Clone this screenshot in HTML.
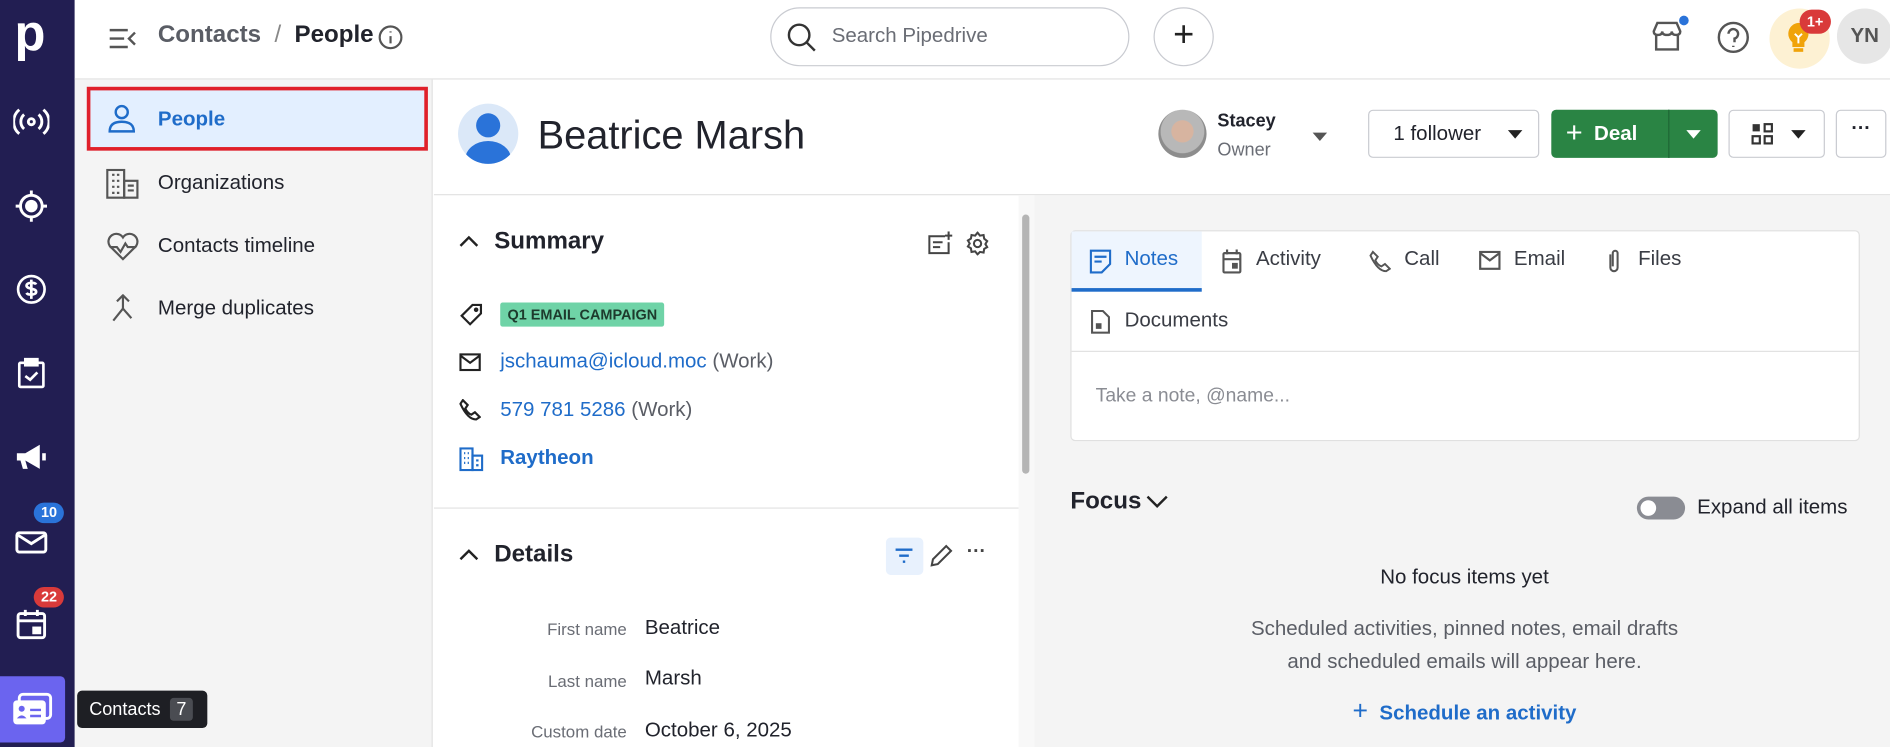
<!DOCTYPE html>
<html><head><meta charset="utf-8"><style>
*{box-sizing:border-box;margin:0;padding:0}
body{width:1890px;height:747px;overflow:hidden;background:#fff;font-family:"Liberation Sans",sans-serif;color:#21232c}
#w{width:1568px;height:620px;transform:scale(1.20536);transform-origin:0 0;position:relative}
.a{position:absolute}
.nav{left:0;top:0;width:62px;height:620px;background:#221e52}
.ni{position:absolute;left:11px;width:30px;height:30px;color:#fff}
.badge{position:absolute;height:17px;border-radius:9px;color:#fff;font-size:12px;font-weight:bold;line-height:17px;padding:0 6px}
.side{left:62px;top:66px;width:297px;height:554px;background:#f4f4f4;border-right:1px solid #e2e2e2}
.si{position:absolute;left:0;width:297px;height:40px;font-size:17px;line-height:40px;padding-left:69px;color:#21232c}
.si svg{position:absolute;left:26px;top:8px}
.top{left:62px;top:0;width:1506px;height:66px;border-bottom:1px solid #e2e2e2;background:#fff}
.btn{position:absolute;border:1px solid #c9cbd1;border-radius:4px;background:#fff;height:40px;top:91px}
.lbl{position:absolute;width:160px;text-align:right;font-size:14px;color:#6a6d75}
.val{position:absolute;left:535px;font-size:17px}
.tab{position:absolute;font-size:17px;color:#3a3d45;top:205px}
</style></head><body><div id="w">
<div class="a nav">
 <div class="a" style="left:12px;top:8px;color:#fff;font-size:42px;font-weight:bold;line-height:40px">p</div>
 <svg class="ni" style="top:86px" viewBox="0 0 30 30" fill="none" stroke="#fff" stroke-width="2.4"><circle cx="15" cy="15" r="2.5"/><path d="M9 9a8 8 0 0 0 0 12M21 9a8 8 0 0 1 0 12M5 5a13 13 0 0 0 0 20M25 5a13 13 0 0 1 0 20"/></svg>
 <svg class="ni" style="top:156px" viewBox="0 0 30 30" fill="none" stroke="#fff" stroke-width="2.4"><circle cx="15" cy="15" r="9"/><circle cx="15" cy="15" r="4" fill="#fff"/><path d="M15 2v4M15 24v4M2 15h4M24 15h4"/></svg>
 <svg class="ni" style="top:225px" viewBox="0 0 30 30" fill="none" stroke="#fff" stroke-width="2.2"><circle cx="15" cy="15" r="11"/><path d="M19 11c-1-2-8-2-8 1s8 2 8 5-7 3-8 1M15 7v16"/></svg>
 <svg class="ni" style="top:295px" viewBox="0 0 30 30" fill="none" stroke="#fff" stroke-width="2.2"><rect x="5" y="6" width="20" height="20" rx="1"/><rect x="10" y="3" width="10" height="5" fill="#fff"/><path d="M10 17l4 3 6-6"/></svg>
 <svg class="ni" style="top:364px" viewBox="0 0 30 30" fill="#fff"><path d="M3 12h7l12-7v20l-12-7H3z"/><path d="M6 18l2 7h4l-2-7z"/><rect x="24" y="12" width="3" height="6"/></svg>
 <svg class="ni" style="top:434px" viewBox="0 0 30 30" fill="none" stroke="#fff" stroke-width="2.4"><rect x="3" y="8" width="24" height="16" rx="2"/><path d="M4 10l11 7 11-7"/></svg>
 <div class="badge" style="left:28px;top:417px;background:#2a73d9">10</div>
 <svg class="ni" style="top:503px" viewBox="0 0 30 30" fill="none" stroke="#fff" stroke-width="2.4"><rect x="4" y="6" width="22" height="20" rx="2"/><path d="M4 12h22M10 3v5M20 3v5"/><rect x="17" y="18" width="5" height="4" fill="#fff"/></svg>
 <div class="badge" style="left:28px;top:487px;background:#d93a3a">22</div>
 <div class="a" style="left:0;top:561px;width:54px;height:55px;background:#6b64ef;border-radius:0 4px 4px 0"></div>
 <svg class="a" style="left:10px;top:574px" width="34" height="30" viewBox="0 0 34 30"><rect x="6" y="2" width="26" height="20" rx="3" fill="none" stroke="#fff" stroke-width="2.4"/><rect x="1" y="7" width="27" height="20" rx="3" fill="#fff"/><circle cx="8" cy="14" r="2.5" fill="#6b64ef"/><path d="M4 22q4-5 8 0z" fill="#6b64ef"/><path d="M15 15h9M15 20h9" stroke="#6b64ef" stroke-width="2"/></svg>
</div>

<div class="a top">
 <svg class="a" style="left:28px;top:22px" width="24" height="20" viewBox="0 0 24 20" fill="none" stroke="#555" stroke-width="2"><path d="M1 3h15M1 10h12M1 17h15M22 5l-5 5 5 5"/></svg>
 <div class="a" style="left:69px;top:18px;font-size:20px;color:#5a5d65;font-weight:bold">Contacts <span style="font-weight:normal;color:#888">&nbsp;/&nbsp;</span> <span style="color:#21232c">People</span></div>
 <svg class="a" style="left:251px;top:20px" width="22" height="22" viewBox="0 0 22 22" fill="none" stroke="#555" stroke-width="1.8"><circle cx="11" cy="11" r="9"/><path d="M11 10v6M11 6v1"/></svg>
 <div class="a" style="left:577px;top:6px;width:298px;height:49px;border:1px solid #c9cbd1;border-radius:25px"></div>
 <svg class="a" style="left:590px;top:18px" width="26" height="26" viewBox="0 0 26 26" fill="none" stroke="#333" stroke-width="2"><circle cx="11" cy="11" r="8.5"/><path d="M17 17l7 7"/></svg>
 <div class="a" style="left:628px;top:20px;font-size:17px;color:#6a6d75">Search Pipedrive</div>
 <div class="a" style="left:895px;top:6px;width:50px;height:49px;border:1px solid #c9cbd1;border-radius:50%;font-size:30px;text-align:center;line-height:44px;color:#222">+</div>
 <svg class="a" style="left:1307px;top:17px" width="28" height="26" viewBox="0 0 28 26" fill="none" stroke="#555" stroke-width="2"><path d="M3 9l3-7h16l3 7q0 3-3.5 3t-3.5-3q0 3-4 3t-4-3q0 3-3.5 3T3 9zM5 12v12h18V12"/></svg>
 <div class="a" style="left:1331px;top:13px;width:8px;height:8px;border-radius:50%;background:#2a73d9"></div>
 <svg class="a" style="left:1362px;top:17px" width="28" height="28" viewBox="0 0 28 28" fill="none" stroke="#555" stroke-width="2"><circle cx="14" cy="14" r="12"/><path d="M10 11a4 4 0 1 1 5 4v3M14 21v1"/></svg>
 <div class="a" style="left:1406px;top:7px;width:50px;height:50px;border-radius:50%;background:#fdf1d3"></div>
 <svg class="a" style="left:1419px;top:18px" width="22" height="28" viewBox="0 0 22 28"><path d="M11 1a9 9 0 0 0-5 16v4h10v-4a9 9 0 0 0-5-16z" fill="#f0a30a"/><rect x="7" y="22" width="8" height="3" fill="#f0a30a"/><path d="M8 10l3 3 3-3M11 13v5" stroke="#fff" stroke-width="1.6" fill="none"/></svg>
 <div class="badge" style="left:1431px;top:8px;background:#d93a3a;height:20px;line-height:20px;border-radius:10px">1+</div>
 <div class="a" style="left:1462px;top:7px;width:46px;height:46px;border-radius:50%;background:#e6e6e6;font-size:17px;font-weight:bold;color:#555;text-align:center;line-height:46px">YN</div>
</div>

<div class="a side">
 <div class="si" style="top:6px;left:10px;width:283px;height:53px;line-height:47px;background:#e3efff;border:3px solid #e0202a;color:#1f6cc9;font-weight:bold;padding-left:56px"><svg style="left:13px;top:10px" width="26" height="26" viewBox="0 0 26 26" fill="none" stroke="#1f6cc9" stroke-width="2"><circle cx="13" cy="8" r="5"/><path d="M3 24q0-8 10-8t10 8z"/></svg>People</div>
 <div class="si" style="top:66px"><svg width="28" height="26" viewBox="0 0 28 26" fill="none" stroke="#555" stroke-width="1.8"><rect x="1" y="1" width="14" height="23"/><rect x="15" y="10" width="11" height="14"/><path d="M5 5h2M9 5h2M5 10h2M9 10h2M5 15h2M9 15h2M5 20h2M9 20h2M18 14h5M18 18h5"/></svg>Organizations</div>
 <div class="si" style="top:118px"><svg width="28" height="26" viewBox="0 0 28 26" fill="none" stroke="#555" stroke-width="1.8"><path d="M14 23L3 12a6 6 0 0 1 11-7 6 6 0 0 1 11 7z"/><path d="M3 13h6l3 4 4-7 2 3h7"/></svg>Contacts timeline</div>
 <div class="si" style="top:170px"><svg width="28" height="26" viewBox="0 0 28 26" fill="none" stroke="#555" stroke-width="1.8"><path d="M9 6l5-5 5 5M14 1v11L6 22M14 12l7 8"/></svg>Merge duplicates</div>
</div>

<!-- header -->
<div class="a" style="left:360px;top:161px;width:1208px;height:1px;background:#e2e2e2"></div>
<div class="a" style="left:380px;top:86px;width:50px;height:50px;border-radius:50%;background:#dbe8f8;overflow:hidden"><div class="a" style="left:15px;top:8px;width:20px;height:20px;border-radius:50%;background:#2a73d9"></div><div class="a" style="left:6px;top:31px;width:38px;height:30px;border-radius:50%;background:#2a73d9"></div></div>
<div class="a" style="left:446px;top:93px;font-size:33px;color:#21232c">Beatrice Marsh</div>
<div class="a" style="left:961px;top:91px;width:40px;height:40px;border-radius:50%;background:radial-gradient(circle at 50% 45%,#d7b4a0 0 30%,#b8b8b8 32% 60%,#8d8d8d 62%)"></div>
<div class="a" style="left:1010px;top:92px;font-size:15px;font-weight:bold">Stacey</div>
<div class="a" style="left:1010px;top:116px;font-size:15px;color:#6a6d75">Owner</div>
<div class="a" style="left:1089px;top:110px;border:6px solid transparent;border-top:7px solid #555"></div>
<div class="btn" style="left:1135px;width:142px;font-size:17px;line-height:38px;padding-left:20px">1 follower<span class="a" style="left:115px;top:16px;border:6px solid transparent;border-top:7px solid #222"></span></div>
<div class="a" style="left:1287px;top:91px;width:138px;height:40px;background:#2a8444;border-radius:4px;color:#fff;font-size:17px;font-weight:bold;line-height:40px;padding-left:12px"><span style="font-size:24px;font-weight:normal;vertical-align:-2px">+</span>&nbsp; Deal<div class="a" style="left:97px;top:0;width:1px;height:40px;background:#1e6634"></div><span class="a" style="left:112px;top:17px;border:6px solid transparent;border-top:7px solid #fff"></span></div>
<div class="btn" style="left:1434px;width:80px"><svg class="a" style="left:18px;top:10px" width="18" height="18" viewBox="0 0 18 18"><rect x="1" y="1" width="6" height="6" fill="#333"/><rect x="11" y="1" width="6" height="6" fill="none" stroke="#333" stroke-width="1.8"/><rect x="1" y="11" width="6" height="6" fill="none" stroke="#333" stroke-width="1.8"/><rect x="11" y="11" width="6" height="6" fill="none" stroke="#333" stroke-width="1.8"/></svg><span class="a" style="left:51px;top:16px;border:6px solid transparent;border-top:7px solid #222"></span></div>
<div class="btn" style="left:1523px;width:42px;text-align:center;font-weight:bold;line-height:30px">···</div>

<!-- left column -->
<div class="a" style="left:845px;top:162px;width:13px;height:458px;background:#f8f8f8"></div>
<div class="a" style="left:848px;top:178px;width:6px;height:215px;border-radius:3px;background:#b5b5b5"></div>
<div class="a" style="left:360px;top:421px;width:485px;height:1px;background:#e2e2e2"></div>
<svg class="a" style="left:380px;top:193px" width="18" height="14" viewBox="0 0 18 14" fill="none" stroke="#222" stroke-width="2"><path d="M2 11l7-7 7 7"/></svg>
<div class="a" style="left:410px;top:189px;font-size:20px;font-weight:bold">Summary</div>
<svg class="a" style="left:770px;top:192px" width="22" height="20" viewBox="0 0 22 20" fill="none" stroke="#444" stroke-width="1.7"><path d="M14 4H1v14h16V9M4 9h8M4 13h6M17 0v7M14 3.5h6"/></svg>
<svg class="a" style="left:801px;top:192px" width="20" height="20" viewBox="0 0 20 20" fill="none" stroke="#444" stroke-width="1.7"><circle cx="10" cy="10" r="3"/><path d="M10 1l2 2.5 3-.5.5 3L18 8l-1.5 2.5L18 13l-2.5 1.5-.5 3-3-.5L10 19l-2-2.5-3 .5-.5-3L2 12.5 3.5 10 2 7.5 4.5 6l.5-3 3 .5z"/></svg>
<svg class="a" style="left:381px;top:251px" width="20" height="20" viewBox="0 0 20 20" fill="none" stroke="#222" stroke-width="1.8"><path d="M11 2h7v7l-9 9-7-7z"/><circle cx="14" cy="6" r="1"/></svg>
<div class="a" style="left:415px;top:251px;height:20px;background:#6fd3a7;border-radius:2px;font-size:12px;font-weight:bold;color:#1d3a2c;line-height:20px;padding:0 6px">Q1 EMAIL CAMPAIGN</div>
<svg class="a" style="left:381px;top:293px" width="18" height="15" viewBox="0 0 18 15" fill="none" stroke="#222" stroke-width="1.8"><rect x="1" y="1" width="16" height="13"/><path d="M1 2l8 6 8-6"/></svg>
<div class="a" style="left:415px;top:290px;font-size:17px;color:#1f6cc9">jschauma@icloud.moc <span style="color:#5a5d65">(Work)</span></div>
<svg class="a" style="left:381px;top:331px" width="18" height="18" viewBox="0 0 18 18" fill="none" stroke="#222" stroke-width="1.8"><path d="M3 1l4 4-2 3q2 4 5 5l3-2 4 4-3 2Q7 17 1 4z"/></svg>
<div class="a" style="left:415px;top:330px;font-size:17px;color:#1f6cc9">579 781 5286 <span style="color:#5a5d65">(Work)</span></div>
<svg class="a" style="left:381px;top:371px" width="20" height="20" viewBox="0 0 20 20" fill="none" stroke="#1f6cc9" stroke-width="1.8"><rect x="1" y="1" width="10" height="18"/><rect x="11" y="7" width="8" height="12"/><path d="M4 5h1M7 5h1M4 9h1M7 9h1M4 13h1M7 13h1M14 11h2M14 15h2"/></svg>
<div class="a" style="left:415px;top:370px;font-size:17px;color:#1f6cc9;font-weight:bold">Raytheon</div>
<svg class="a" style="left:380px;top:453px" width="18" height="14" viewBox="0 0 18 14" fill="none" stroke="#222" stroke-width="2"><path d="M2 11l7-7 7 7"/></svg>
<div class="a" style="left:410px;top:449px;font-size:20px;font-weight:bold">Details</div>
<div class="a" style="left:735px;top:446px;width:31px;height:31px;background:#e8f1fd;border-radius:4px"></div>
<svg class="a" style="left:741px;top:454px" width="18" height="14" viewBox="0 0 18 14" stroke="#1f6cc9" stroke-width="2"><path d="M2 2h14M5 7h8M8 12h2"/></svg>
<svg class="a" style="left:771px;top:451px" width="20" height="20" viewBox="0 0 20 20" fill="none" stroke="#444" stroke-width="1.7"><path d="M2 18l1-5L14 2l4 4L7 17z"/></svg>
<div class="a" style="left:802px;top:449px;font-size:16px;font-weight:bold;color:#444">···</div>
<div class="lbl" style="left:360px;top:514px">First name</div><div class="val" style="top:511px">Beatrice</div>
<div class="lbl" style="left:360px;top:557px">Last name</div><div class="val" style="top:553px">Marsh</div>
<div class="lbl" style="left:360px;top:599px">Custom date</div><div class="val" style="top:596px">October 6, 2025</div>

<!-- right region -->
<div class="a" style="left:858px;top:162px;width:710px;height:458px;background:#f4f4f4"></div>
<div class="a" style="left:888px;top:191px;width:655px;height:175px;background:#fff;border:1px solid #e0e0e0;border-radius:4px"></div>
<div class="a" style="left:889px;top:192px;width:108px;height:50px;background:#eef5fe;border-bottom:3px solid #1f6cc9"></div>
<div class="a" style="left:889px;top:291px;width:653px;height:1px;background:#e2e2e2"></div>
<svg class="a" style="left:904px;top:207px" width="18" height="20" viewBox="0 0 18 20" fill="none" stroke="#1f6cc9" stroke-width="1.8"><path d="M1 1h16v11l-7 7H1zM4 6h10M4 10h6"/></svg>
<div class="tab" style="left:933px;color:#1f6cc9">Notes</div>
<svg class="a" style="left:1014px;top:207px" width="16" height="20" viewBox="0 0 16 20" fill="none" stroke="#555" stroke-width="1.8"><rect x="1" y="3" width="14" height="16" rx="1"/><path d="M1 8h14M4 0v4M12 0v4"/><rect x="9" y="12" width="3" height="3" fill="#555"/></svg>
<div class="tab" style="left:1042px">Activity</div>
<svg class="a" style="left:1136px;top:207px" width="18" height="20" viewBox="0 0 18 18" fill="none" stroke="#555" stroke-width="1.6"><path d="M3 1l4 4-2 3q2 4 5 5l3-2 4 4-3 2Q7 17 1 4z"/></svg>
<div class="tab" style="left:1165px">Call</div>
<svg class="a" style="left:1227px;top:208px" width="18" height="16" viewBox="0 0 18 16" fill="none" stroke="#555" stroke-width="1.8"><rect x="1" y="1" width="16" height="14"/><path d="M1 2l8 6 8-6"/></svg>
<div class="tab" style="left:1256px">Email</div>
<svg class="a" style="left:1332px;top:206px" width="14" height="22" viewBox="0 0 14 22" fill="none" stroke="#555" stroke-width="1.7"><path d="M4 5v11a3 3 0 0 0 6 0V4a2 2 0 0 0-4 0v11"/></svg>
<div class="tab" style="left:1359px">Files</div>
<svg class="a" style="left:905px;top:257px" width="16" height="20" viewBox="0 0 16 20" fill="none" stroke="#555" stroke-width="1.7"><path d="M1 1h9l5 5v13H1z"/><rect x="5" y="12" width="3" height="3" fill="#555"/></svg>
<div class="tab" style="left:933px;top:256px">Documents</div>
<div class="a" style="left:909px;top:320px;font-size:16px;color:#8a8c93">Take a note, @name...</div>
<div class="a" style="left:888px;top:405px;font-size:20px;font-weight:bold">Focus</div>
<svg class="a" style="left:950px;top:410px" width="20" height="12" viewBox="0 0 20 12" fill="none" stroke="#222" stroke-width="2"><path d="M2 2l8 8 8-8"/></svg>
<div class="a" style="left:1358px;top:412px;width:40px;height:19px;border-radius:10px;background:#8a8c93"></div>
<div class="a" style="left:1361px;top:415px;width:13px;height:13px;border-radius:50%;background:#fff"></div>
<div class="a" style="left:1408px;top:411px;font-size:17px">Expand all items</div>
<div class="a" style="left:1000px;top:469px;width:430px;text-align:center;font-size:17px">No focus items yet</div>
<div class="a" style="left:980px;top:508px;width:470px;text-align:center;font-size:17px;color:#5a5d65;line-height:27px">Scheduled activities, pinned notes, email drafts<br>and scheduled emails will appear here.</div>
<div class="a" style="left:1000px;top:577px;width:430px;text-align:center;font-size:17px;color:#1f6cc9;font-weight:bold"><span style="font-size:22px;font-weight:normal">+</span>&nbsp; Schedule an activity</div>

<div class="a" style="left:64px;top:573px;width:108px;height:31px;background:#1e1f24;border-radius:4px;color:#fff;font-size:15px;line-height:31px;padding-left:10px;z-index:10">Contacts <span style="background:#4a4c52;padding:1px 5px;border-radius:3px;margin-left:4px">7</span></div>
</div></body></html>
